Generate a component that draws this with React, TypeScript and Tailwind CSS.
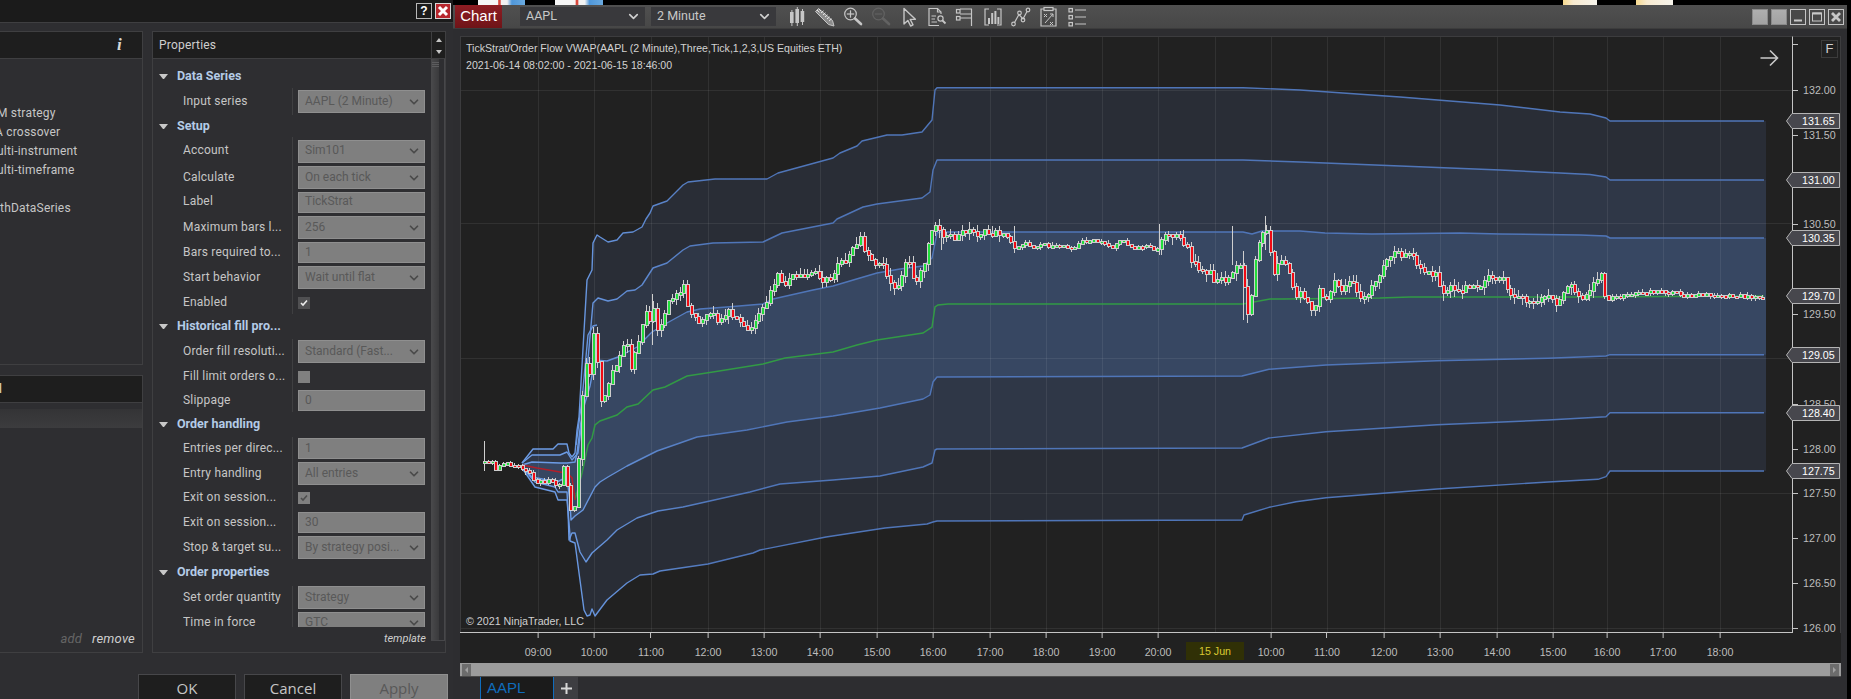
import React from "react";
import { ChevronDown } from "lucide-react";

type P = [number, number];
const z7 = (a: number[][]): P[] => a.map(([x, y]) => [560 + x / 3, 200 + y / 3]);
const z8 = (a: number[][]): P[] => a.map(([x, y]) => [1060 + x / 3, 200 + y / 3]);

const up3: P[] = [[522,463],[533,449],[553,449],[558,444],[567,444],[569,453],[572,457],[575,453],[577,430],[579,417],[587,280],[592,270],[593,243],[597,235],[600,237],[608,242],[617,240],[623,233],[633,232],[642,227],[646,219],[650,213],[653,206],[667,201],[678,190],[683,185],[688,182],[715,179],[767,179],[778,173],[833,158],[840,153],[857,146],[862,141],[887,135],[902,135],[922,132],[932,120],[935,90],[937,87.7],[1243,87.7],[1300,90],[1400,97],[1500,105],[1560,112],[1590,114],[1606,118],[1610,121],[1764,121]];
const up2: P[] = [[522,463],[532,455],[560,455],[567,452],[572,460],[578,453],[582,420],[585,393],[593,303],[598,298],[608,301],[617,299],[627,291],[635,290],[642,285],[653,268],[667,263],[683,250],[690,246],[713,243],[763,242],[782,233],[833,223],[837,219],[863,207],[877,204],[922,198],[930,192],[933,170],[937,160],[1243,160],[1300,162],[1400,166],[1500,170],[1560,173],[1590,174.5],[1606,177],[1610,180],[1764,180]];
const up1: P[] = [[522,465],[532,462],[560,463],[567,463],[575,462],[577,453],[582,413],[590,386],[595,360],[607,361],[618,357],[637,347],[652,332],[667,323],[687,312],[700,309],[727,307],[763,304],[773,299],[813,290],[833,286],[860,278],[877,273],[900,269],[923,266],[932,258],[937,233],[940,232],[1243,232],[1252,234],[1262,231],[1300,231],[1325,233],[1372,234],[1460,233],[1500,234],[1580,235],[1606,236],[1610,238],[1764,238]];
const stray: P[] = [[576,445],[582,400],[588,335],[593,326],[597,325]];
const dn1: P[] = [[522,467],[532,477],[557,482],[567,477],[570,503],[571,520],[575,516],[583,510],[595,487],[600,482],[608,477],[627,466],[657,451],[680,443],[697,437],[747,430],[787,422],[833,416],[880,408],[923,399],[930,395],[933,382],[937,377],[1242,376],[1269,369.3],[1326,365],[1437,360.7],[1548,358.3],[1606,356],[1610,354.7],[1764,354.7]];
const dn2: P[] = [[522,467],[535,482],[555,487],[558,492],[567,492],[568,510],[569,540],[572,533],[575,533],[580,552],[586,562],[592,553],[607,540],[617,530],[637,518],[658,511],[683,507],[750,492],[780,484],[833,480],[880,476],[923,467],[932,463],[935,450],[937,449],[1242,448],[1269,438],[1326,431.7],[1437,424.7],[1548,420],[1606,416.7],[1610,412.7],[1764,412.7]];
const dn3: P[] = [[522,468],[535,487],[555,492],[558,500],[567,500],[570,535],[570,541],[575,543],[584,610],[587,616],[590,615],[592,609],[595,616],[607,600],[627,583],[640,575],[653,574],[660,571],[708,564],[753,553],[760,550],[826,537],[885,528],[927,524],[933,522],[937,521],[1242,520],[1244,515],[1269,507.3],[1296,501.7],[1326,497.7],[1437,489],[1548,482],[1598,479.3],[1606,476.7],[1610,471],[1764,471]];
const green: P[] = [[575,500],[582,473],[588,445],[592,438],[595,425],[600,421],[617,415],[627,407],[638,404],[653,390],[665,387],[687,376],[713,372],[763,364],[785,358],[833,352],[857,345],[877,340],[923,333],[932,327],[935,307],[938,305],[948,304],[1243,304],[1270,299],[1283,299],[1380,298],[1410,297],[1580,297],[1764,296]];
const red: P[] = [[522,465],[537,468],[560,472],[567,473],[572,478],[575,500]];

const pricePath: P[] = [
  [484,463],[490,460],[495,470],[500,465],[507,463],[512,468],[515,465],[522,467],[525,470],[537,482],[553,480],[558,492],[562,465],[565,470],[568,497],[573,523],[577,477],[579,443],
  ...z7([[60,650],[70,530],[80,490],[90,540],[100,390],[110,470],[120,600],[135,590],[150,530],[170,490],[185,430],[200,430],[210,510],[225,450],[245,380],[255,340],[270,360],[280,320],[290,395],[310,360],[325,310],[345,295],[370,255],[380,320],[400,345],[415,375],[440,350],[460,350],[485,370],[505,340],[530,360],[545,375],[565,395],[585,370],[605,335],[625,290],[650,225],[665,260],[690,235],[720,235],[770,215],[790,245],[815,235],[835,180],[865,175],[900,115],[925,180],[945,195],[960,180],[985,240],[1015,265],[1030,200],[1045,195],[1065,255],[1090,190],[1115,80],[1140,85],[1155,115],[1185,115],[1215,90],[1250,100],[1330,100],[1365,145],[1390,130],[1420,140],[1450,130],[1480,145]]),
  ...z8([[0,135],[40,145],[70,120],[130,130],[160,145],[175,120],[220,142],[260,140],[295,150],[300,110],[330,100],[355,120],[380,130],[390,185],[410,200],[430,225],[445,215],[460,235],[490,240],[510,240],[525,195],[545,210],[555,300],[560,355],[575,270],[585,170],[600,120],[615,60],[630,160],[640,230],[660,175],[680,190],[700,280],[730,285],[760,340],[775,270],[800,300],[820,250],[850,270],[870,230],[900,295],[915,295],[950,240],[980,175],[1005,155],[1025,175],[1055,150],[1070,195],[1110,225],[1130,230],[1145,270],[1170,260],[1185,280],[1225,265],[1240,245],[1265,265],[1285,230],[1330,240],[1350,290],[1380,290],[1420,315],[1460,290],[1490,310],[1530,255]]),
  [1580,298],[1590,290],[1600,271],[1605,300],[1625,295],[1653,291],[1680,294],[1712,295],[1740,296],[1764,297],
];

const spikes: number[][] = [[484,441,471],[1159,224,255],[1232,226,265],[1243,251,320],[1247,280,323],[1265,216,250],[1014,226,253],[652,294,345],[941,225,250]];

const interp = (x: number) => {
  for (let i = 1; i < pricePath.length; i++) {
    const [a, b] = pricePath[i - 1];
    const [c, d] = pricePath[i];
    if (x <= c) return b + ((d - b) * (x - a)) / Math.max(c - a, 0.01);
  }
  return pricePath[pricePath.length - 1][1];
};
const noise = (i: number) => {
  const v = Math.sin(i * 12.9898) * 43758.5453;
  return v - Math.floor(v);
};
const vol = (x: number) => (x < 520 ? 0.35 : x < 575 ? 0.5 : x < 1000 ? 1 : x < 1160 ? 0.45 : x < 1600 ? 1 : 0.45);

const candles = (() => {
  const out: { x: number; top: number; bot: number; hi: number; lo: number; up: boolean }[] = [];
  let prev = interp(484);
  let i = 0;
  for (let x = 484; x < 1764; x += 3.76, i++) {
    const k = vol(x);
    const y = interp(x) + (noise(i) - 0.5) * 7 * k;
    const top = Math.min(prev, y);
    const bot = Math.max(prev, y);
    out.push({ x: Math.round(x), top, bot: Math.max(bot, top + 1.5), hi: top - noise(i + 400) * 8 * k, lo: bot + noise(i + 800) * 8 * k, up: y < prev });
    prev = y;
  }
  return out;
})();

const ps = (a: P[]) => a.map(([x, y]) => `${x},${y}`).join(" ");
const poly = (a: P[], b: P[]) => ps([...a, [1766, a[a.length - 1][1]], [1766, b[b.length - 1][1]], ...[...b].reverse()]);

const vGrid = [538,594,651,708,764,820,877,933,990,1046,1102,1158,1215,1271,1327,1384,1440,1497,1553,1607,1663,1720];
const hGrid = [90,223,358,493.5,628];
const timeLabels: [number, string][] = [[538,"09:00"],[594,"10:00"],[651,"11:00"],[708,"12:00"],[764,"13:00"],[820,"14:00"],[877,"15:00"],[933,"16:00"],[990,"17:00"],[1046,"18:00"],[1102,"19:00"],[1158,"20:00"],[1271,"10:00"],[1327,"11:00"],[1384,"12:00"],[1440,"13:00"],[1497,"14:00"],[1553,"15:00"],[1607,"16:00"],[1663,"17:00"],[1720,"18:00"]];
const priceTicks: [number, string][] = [[90,"132.00"],[135,"131.50"],[224,"130.50"],[314,"129.50"],[404,"128.50"],[449,"128.00"],[493.5,"127.50"],[538,"127.00"],[583,"126.50"],[628,"126.00"]];
const flags: [number, string][] = [[121,"131.65"],[180,"131.00"],[238,"130.35"],[296,"129.70"],[355,"129.05"],[413,"128.40"],[471,"127.75"]];

function ChartSvg() {
  return (
    <svg className="absolute inset-0" width={1332} height={597} viewBox="460 36 1332 597">
      <defs>
        <linearGradient id="bandStroke" gradientUnits="userSpaceOnUse" x1={560} x2={720} y1={0} y2={0}>
          <stop offset="0" stopColor="#6c9ce6" />
          <stop offset="1" stopColor="#4f75b8" />
        </linearGradient>
      </defs>
      <polygon points={poly(up3, dn3)} fill="#292d36" />
      <polygon points={poly(up2, dn2)} fill="#2f3747" />
      <polygon points={poly(up1, dn1)} fill="#374762" />
      <g stroke="#ffffff" strokeOpacity={0.075} shapeRendering="crispEdges">
        {vGrid.map((x) => <line key={x} x1={x} x2={x} y1={36} y2={633} />)}
        {hGrid.map((y) => <line key={y} x1={460} x2={1792} y1={y} y2={y} />)}
      </g>
      <path d="M460.5 633V36.5H1792" fill="none" stroke="#3c3c3e" shapeRendering="crispEdges" />
      <g fill="none" stroke="url(#bandStroke)" strokeWidth={1.4} strokeLinejoin="round">
        {[up3, up2, up1, stray, dn1, dn2, dn3].map((l, i) => <polyline key={i} points={ps(l)} />)}
      </g>
      <polyline points={ps(green)} fill="none" stroke="#329a45" strokeWidth={1.5} />
      <polyline points={ps(red)} fill="none" stroke="#b01f2a" strokeWidth={1.6} />
      <g shapeRendering="crispEdges">
        {spikes.map(([x, a, b]) => <line key={x} x1={x} x2={x} y1={a} y2={b} stroke="#cfcfcf" />)}
        {candles.map((c, i) => (
          <g key={i}>
            <line x1={c.x + 0.5} x2={c.x + 0.5} y1={c.hi} y2={c.lo} stroke="#cdcdcd" />
            <rect x={c.x - 1} y={c.top - 1} width={4} height={c.bot - c.top + 2} fill="#cdcdcd" />
            <rect x={c.x} y={c.top} width={2} height={c.bot - c.top} fill={c.up ? "#22dd3c" : "#f00a14"} />
          </g>
        ))}
      </g>
      <path d="M1760.5 58H1777.5M1770 50.5L1777.5 58L1770 65.5" fill="none" stroke="#c9c9c9" strokeWidth={1.6} />
    </svg>
  );
}

const ic = "#c6c6c6";
const Svg = ({ children }: { children: React.ReactNode }) => (
  <svg width={22} height={22} viewBox="0 0 22 22" fill="none" stroke={ic} strokeWidth={1.2}>{children}</svg>
);
const MagGlass = ({ c, plus }: { c: string; plus?: boolean }) => (
  <svg width={22} height={22} viewBox="0 0 22 22" fill="none" stroke={c} strokeWidth={1.2}>
    <circle cx={8.5} cy={8} r={5.8} />
    <path d="M4.8 8H12.2" />
    {plus && <path d="M8.5 4.3V11.7" />}
    <path d="M13 12.5L19 18" strokeWidth={2.6} strokeLinecap="round" />
  </svg>
);
const icons: React.ReactNode[] = [
  <Svg key="c"><g fill={ic} stroke="none"><rect x={4} y={6} width={3.6} height={11} /><rect x={5.4} y={4} width={1} height={16} /><rect x={9.4} y={3} width={3.6} height={14} /><rect x={10.8} y={1} width={1} height={19} /><rect x={14.6} y={5} width={3.6} height={11} /><rect x={16} y={3} width={1} height={16} /></g></Svg>,
  <Svg key="p"><path d="M4.5 2.5L1.5 5.5L14.5 18.5L20 20L18.5 14.5Z" fill="#8c8c8c" strokeWidth={1} /><path d="M3 4L5.5 6.5M5 3L7 5M7 7L9.5 4.8M9 9L11.5 6.8M11 11L13.5 8.8M13 13L15.5 10.8M15 15L17.5 12.8" strokeWidth={1} stroke="#e6e6e6" /></Svg>,
  <MagGlass key="z+" c={ic} plus />,
  <MagGlass key="z-" c="#626262" />,
  <Svg key="a"><path d="M6 2.5V18L9.8 14.4L12.6 20L15 18.8L12.2 13.4L17.4 13.2Z" strokeWidth={1.4} strokeLinejoin="round" /></Svg>,
  <Svg key="d"><path d="M13 19.5H3V2.5H11.5L15 6V8" /><path d="M11.5 2.5V6H15M5.5 10H10M5.5 13H9M5.5 16H11" /><circle cx={14.5} cy={12.5} r={2.6} /><path d="M16.5 14.5L19.5 17.5" strokeWidth={1.8} /></Svg>,
  <Svg key="r"><rect x={2.5} y={3.5} width={3.5} height={3.5} /><rect x={2.5} y={10.5} width={3.5} height={3.5} /><path d="M6 3H18M6 8H18M6 12H18M17.5 3V20" /></Svg>,
  <Svg key="f"><path d="M7 3H3V19H7M15 3H19V19H15" strokeWidth={1.2} /><g fill={ic} stroke="none"><rect x={6} y={12} width={2} height={6} /><rect x={9.2} y={7} width={2} height={11} /><rect x={12.4} y={5} width={2} height={13} /><rect x={15.4} y={11} width={2} height={7} /></g></Svg>,
  <Svg key="l"><path d="M4.5 16.5L9 8.5L13 13L17 5.5" /><circle cx={3.5} cy={18} r={1.8} /><circle cx={9.5} cy={7} r={1.8} /><circle cx={13} cy={14} r={1.8} /><circle cx={18} cy={4} r={1.8} /></Svg>,
  <Svg key="s"><path d="M6 3H3V20H18V3H15" /><rect x={6} y={1.5} width={9} height={3} /><path d="M6 8L9 11M9 8L6 11M12 16L15 19M15 16L12 19M7 17L15 8M12 8H15V11" strokeWidth={1} /></Svg>,
  <Svg key="t"><rect x={3} y={2.5} width={3.4} height={3.4} /><rect x={3} y={9.5} width={3.4} height={3.4} /><rect x={3} y={16.5} width={3.4} height={3.4} /><path d="M9 4H20M9 11H20M9 18H20" /></Svg>,
];

type Row = { t: "s" | "d" | "i" | "c" | "n"; l: string; v?: string; h: string; on?: boolean; dark?: boolean };
const rows: Row[] = [
  { t: "s", l: "Data Series", h: "h-[24px]" },
  { t: "d", l: "Input series", v: "AAPL (2 Minute)", h: "h-[27px]" },
  { t: "s", l: "Setup", h: "h-[22px]" },
  { t: "d", l: "Account", v: "Sim101", h: "h-[28px]" },
  { t: "d", l: "Calculate", v: "On each tick", h: "h-[25px]" },
  { t: "i", l: "Label", v: "TickStrat", h: "h-[24px]" },
  { t: "d", l: "Maximum bars l...", v: "256", h: "h-[27px]" },
  { t: "i", l: "Bars required to...", v: "1", h: "h-[23px]" },
  { t: "d", l: "Start behavior", v: "Wait until flat", h: "h-[27px]" },
  { t: "c", l: "Enabled", on: true, dark: true, h: "h-[23px]" },
  { t: "s", l: "Historical fill pro...", h: "h-[25px]" },
  { t: "d", l: "Order fill resoluti...", v: "Standard (Fast...", h: "h-[25px]" },
  { t: "c", l: "Fill limit orders o...", h: "h-[25px]" },
  { t: "i", l: "Slippage", v: "0", h: "h-[23px]" },
  { t: "s", l: "Order handling", h: "h-[25px]" },
  { t: "i", l: "Entries per direc...", v: "1", h: "h-[23px]" },
  { t: "d", l: "Entry handling", v: "All entries", h: "h-[27px]" },
  { t: "c", l: "Exit on session...", on: true, h: "h-[22px]" },
  { t: "i", l: "Exit on session...", v: "30", h: "h-[27px]" },
  { t: "d", l: "Stop & target su...", v: "By strategy posi...", h: "h-[23px]" },
  { t: "s", l: "Order properties", h: "h-[27px]" },
  { t: "d", l: "Set order quantity", v: "Strategy", h: "h-[23px]" },
  { t: "d", l: "Time in force", v: "GTC", h: "h-[28px]" },
];

function PropRow({ r }: { r: Row }) {
  if (r.t === "s")
    return (
      <div className={`${r.h} flex items-center shrink-0 font-bold text-[#b4cbe6] text-[12.5px] tracking-normal`}>
        <span className="ml-[6px] w-[9px] h-0 border-x-[4.5px] border-x-transparent border-t-[5px] border-t-[#c8c8c8]" />
        <span className="ml-[9px]">{r.l}</span>
      </div>
    );
  return (
    <div className={`${r.h} flex items-center shrink-0 text-[#c6c6c6]`}>
      <span className="ml-[30px] w-[109px] whitespace-nowrap overflow-hidden pb-[2px]">{r.l}</span>
      <span className="w-px h-full bg-[#3f3f41]" />
      <div className="ml-[5px] w-[127px] flex items-center">
        {r.t === "c" ? (
          <span className={`w-[12px] h-[12px] flex items-center justify-center ${r.dark ? "bg-[#505052]" : "bg-[#808080]"}`}>
            {r.on && (
              <svg width={8} height={8} viewBox="0 0 8 8" fill="none" stroke={r.dark ? "#ececec" : "#4d4d4d"} strokeWidth={1.6}><path d="M1 4L3 6L7 1.5" /></svg>
            )}
          </span>
        ) : (
          <div className={`w-full ${r.t === "d" ? "h-[23px]" : "h-[21px]"} shrink-0 flex items-center justify-between pl-[6px] pr-[3px] bg-[#7f7f7f] border border-[#8f8f8f] text-[#595959] tracking-normal`}>
            <span className="whitespace-nowrap pb-[2px]">{r.v}</span>
            {r.t === "d" && <ChevronDown size={14} strokeWidth={3} color="#4a4a4a" />}
          </div>
        )}
      </div>
    </div>
  );
}

const listRows: [string, string][] = [
  ["M strategy", "-ml-[3px]"],
  ["A crossover", "-ml-[5px]"],
  ["ulti-instrument", "-ml-[3px]"],
  ["ulti-timeframe", "-ml-[3px]"],
  ["", "ml-0"],
  ["thDataSeries", "ml-0"],
];

function LeftWindow() {
  return (
    <div className="w-[453px] h-full flex flex-col shrink-0 bg-[#2e2e31] overflow-hidden font-['Roboto',sans-serif] text-[12px] tracking-[0.2px]">
      <div className="h-[23px] shrink-0 flex items-center justify-end gap-[3px] pr-[2px] bg-[#1b1b1b] border-b border-[#3f3f41]">
        <div className="w-[16px] h-[16px] bg-[#1b1b1b] border border-[#b8b8b8] flex items-center justify-center text-white font-bold text-[12px] font-['Liberation_Sans',sans-serif]">?</div>
        <div className="w-[16px] h-[16px] bg-[#b7272e] border border-[#d8d8d8] flex items-center justify-center">
          <svg width={12} height={12} viewBox="0 0 12 12" stroke="#ffffff" strokeWidth={3}><path d="M2 2L10 10M10 2L2 10" /></svg>
        </div>
      </div>
      <div className="h-[622px] shrink-0 mt-[8px] flex gap-[9px]">
        <div className="w-[143px] shrink-0 flex flex-col gap-[10px]">
          <div className="h-[334px] border border-l-0 border-[#3f3f41] flex flex-col">
            <div className="h-[27px] shrink-0 bg-[#1e1e1e] border-b border-[#3f3f41] flex items-center justify-end pr-[20px] text-[#d8d8d8] font-['Liberation_Serif',serif] italic font-bold text-[17px]">i</div>
            <div className="pt-[44px] flex flex-col overflow-hidden text-[#c6c6c6]">
              {listRows.map(([t, m], i) => (
                <div key={i} className={`h-[19px] shrink-0 flex items-center whitespace-nowrap ${m}`}>{t}</div>
              ))}
            </div>
          </div>
          <div className="flex-1 border border-l-0 border-[#3f3f41] flex flex-col overflow-hidden">
            <div className="h-[27px] shrink-0 bg-[#1e1e1e] border-b border-[#3f3f41] flex items-center -ml-[5px] font-bold text-[#d0c8a8]">d</div>
            <div className="h-[19px] shrink-0 mt-[6px] bg-gradient-to-b from-[#343436] to-[#3c3c3e]" />
            <div className="flex-1" />
            <div className="h-[26px] shrink-0 flex items-center justify-end gap-[10px] pr-[7px] italic text-[13px]">
              <span className="text-[#656565]">add</span>
              <span className="text-[#cfcfcf]">remove</span>
            </div>
          </div>
        </div>
        <div className="w-[294px] shrink-0 border border-[#3f3f41] flex flex-col relative">
          <div className="h-[27px] shrink-0 bg-[#1e1e1e] border-b border-[#3f3f41] flex items-center pl-[6px] text-[#cfcfcf]">Properties</div>
          <div className="absolute right-0 top-0 w-[14px] h-[27px] border-l border-[#3f3f41] flex flex-col items-center justify-center gap-[8px]">
            <span className="h-0 w-0 border-x-[3.5px] border-x-transparent border-b-[4px] border-b-[#c4c4c4]" />
            <span className="h-0 w-0 border-x-[3.5px] border-x-transparent border-t-[4px] border-t-[#c4c4c4]" />
          </div>
          <div className="flex-1 flex min-h-0">
            <div className="flex-1 flex flex-col min-w-0">
              <div className="h-[568px] shrink-0 overflow-hidden pt-[5px] flex flex-col">
                {rows.map((r, i) => <PropRow key={i} r={r} />)}
              </div>
              <div className="flex-1 flex items-center justify-end pr-[5px] italic text-[#cfcfcf] text-[11px] tracking-normal">template</div>
            </div>
            <div className="w-[14px] shrink-0 h-[582px] flex border-b border-r border-[#47474a]">
              <div className="w-[8px] h-full bg-gradient-to-r from-[#4a4a4c] to-[#3a3a3c] flex flex-col gap-[1px] pt-[3px] items-end">
                <span className="h-px w-[7px] bg-[#5c5c5e]" />
                <span className="h-px w-[7px] bg-[#5c5c5e]" />
                <span className="h-px w-[7px] bg-[#5c5c5e]" />
              </div>
            </div>
          </div>
        </div>
      </div>
      <div className="mt-[21px] flex justify-end gap-[8px] pr-[5px] text-[15px] font-['Open_Sans',sans-serif] tracking-normal">
        <div className="w-[98px] h-[30px] shrink-0 border border-[#47474a] bg-[#1e1e1e] flex justify-center pt-[2px] text-[#c6c6c6]">OK</div>
        <div className="w-[98px] h-[30px] shrink-0 border border-[#47474a] bg-[#1e1e1e] flex justify-center pt-[2px] text-[#c6c6c6]">Cancel</div>
        <div className="w-[98px] h-[30px] shrink-0 border border-[#8f8f8f] bg-[#7f7f7f] flex justify-center pt-[2px] text-[#585858]">Apply</div>
      </div>
    </div>
  );
}

const GreyBtn = () => <div className="w-[16px] h-[16px] bg-gradient-to-b from-[#aeaeae] to-[#a2a2a2] border border-[#8a8a8a]" />;
const WinBtn = ({ children }: { children: React.ReactNode }) => (
  <div className="w-[16px] h-[16px] border border-[#c4c4c4] bg-[#484848] flex items-center justify-center">
    <svg width={12} height={12} viewBox="0 0 12 12" fill="none" stroke="#c8c8c8">{children}</svg>
  </div>
);

function TitleBar() {
  return (
    <div className="h-[24px] shrink-0 flex items-center bg-gradient-to-b from-[#505050] to-[#474747] border-b border-[#3c3c3c] font-['Roboto',sans-serif]">
      <div className="ml-[2px] w-[47px] h-[23px] bg-gradient-to-b from-[#8e1d23] to-[#6f1418] flex items-center justify-center text-white text-[15px] font-['Liberation_Sans',sans-serif]">Chart</div>
      <div className="ml-[18px] w-[125px] h-[19px] bg-[#39393c] flex items-center justify-between pl-[6px] pr-[4px] text-[#c8c8c8] text-[12.5px]">
        <span>AAPL</span><ChevronDown size={15} strokeWidth={2.6} color="#d0d0d0" />
      </div>
      <div className="ml-[6px] w-[125px] h-[19px] bg-[#39393c] flex items-center justify-between pl-[6px] pr-[4px] text-[#c8c8c8] text-[12.5px]">
        <span>2 Minute</span><ChevronDown size={15} strokeWidth={2.6} color="#d0d0d0" />
      </div>
      <div className="ml-[7px] flex">
        {icons.map((n, i) => <div key={i} className="w-[28px] flex justify-center">{n}</div>)}
      </div>
      <div className="ml-auto mr-[3px] flex gap-[3px]">
        <GreyBtn /><GreyBtn />
        <WinBtn><path d="M2 9.5H10" strokeWidth={2} /></WinBtn>
        <WinBtn><rect x={1.5} y={2} width={9} height={8} strokeWidth={1} /><path d="M1.5 2.5H10.5" strokeWidth={2} /></WinBtn>
        <WinBtn><path d="M2 2L10 10M10 2L2 10" strokeWidth={2.8} /></WinBtn>
      </div>
    </div>
  );
}

function ChartPanel() {
  return (
    <div className="flex-1 min-h-0 pl-[7px] pr-[6px] pt-[7px] flex flex-col font-['Liberation_Sans',sans-serif]">
      <div className="flex-1 flex flex-col bg-[#212121]">
        <div className="h-[597px] shrink-0 flex">
          <div className="w-[1332px] h-[597px] shrink-0 relative border-b border-[#c4c4c4] overflow-hidden">
            <ChartSvg />
            <div className="absolute left-[6px] top-[4px] text-[10.6px] leading-[17px] text-[#d2d2d2] whitespace-nowrap">
              <div>TickStrat/Order Flow VWAP(AAPL (2 Minute),Three,Tick,1,2,3,US Equities ETH)</div>
              <div>2021-06-14 08:02:00 - 2021-06-15 18:46:00</div>
            </div>
            <div className="absolute left-[6px] top-[577px] text-[10.7px] text-[#d0d0d0] whitespace-nowrap">© 2021 NinjaTrader, LLC</div>
          </div>
          <div className="w-[49px] h-[597px] shrink-0 relative border-l border-t border-r border-l-[#c4c4c4] border-t-[#3c3c3e] border-r-[#3c3c3e] bg-[#212121]">
            <span className="absolute left-0 top-[7px] w-[5px] h-px bg-[#c4c4c4]" />
            <div className="absolute left-[28px] top-[3px] w-[17px] h-[18px] border border-[#3c3c3c] flex items-center justify-center text-[13px] text-[#cfcfcf]">F</div>
            {priceTicks.map(([y, t]) => (
              <div key={t} className="absolute left-0 flex items-center h-[14px] -translate-y-1/2" style={{ top: y - 37 }}>
                <span className="w-[5px] h-px bg-[#c4c4c4]" />
                <span className="ml-[5px] text-[10.7px] text-[#bdbdbd]">{t}</span>
              </div>
            ))}
            {flags.map(([y, t]) => (
              <div key={t} className="absolute -left-[7px] h-[16px] w-[54px] -translate-y-1/2 flex items-center" style={{ top: y - 37 }}>
                <svg width={54} height={16} viewBox="0 0 54 16" className="absolute inset-0">
                  <path d="M0.5 8L6 0.5H53.5V15.5H6Z" fill="#47474d" stroke="#b4b4b4" />
                </svg>
                <span className="relative ml-[16px] text-[10.7px] text-white">{t}</span>
              </div>
            ))}
          </div>
        </div>
        <div className="h-[30px] shrink-0 relative">
          {timeLabels.map(([x, t], i) => (
            <div key={i} className="absolute top-0 -translate-x-1/2 flex flex-col items-center" style={{ left: x - 460 }}>
              <span className="w-px h-[5px] bg-[#c4c4c4]" />
              <span className="mt-[6px] text-[10.7px] text-[#bdbdbd]">{t}</span>
            </div>
          ))}
          <div className="absolute left-[726px] top-[9px] w-[58px] h-[18px] bg-[#303006] flex items-center justify-center text-[10.7px] text-[#d9c832]">15 Jun</div>
        </div>
        <div className="h-[14px] shrink-0 bg-[#9c9c9c] flex justify-between px-[2px] items-center border-b border-[#4a4a4a]">
          <div className="w-[9px] h-[12px] bg-[#6c6c6c] flex items-center justify-center">
            <span className="w-0 h-0 border-y-[3px] border-y-transparent border-r-[3px] border-r-[#a0a0a0]" />
          </div>
          <div className="w-[9px] h-[12px] bg-[#6c6c6c] flex items-center justify-center">
            <span className="w-0 h-0 border-y-[3px] border-y-transparent border-l-[3px] border-l-[#a0a0a0]" />
          </div>
        </div>
      </div>
    </div>
  );
}

function TabBar() {
  return (
    <div className="h-[22px] shrink-0 flex pl-[27px] bg-[#2d2d30] font-['Liberation_Sans',sans-serif]">
      <div className="w-[74px] h-[22px] bg-[#1b1b1b] border-x border-[#0f6cbd] flex items-center pl-[6px] text-[15px] text-[#0f6cbd]">AAPL</div>
      <div className="w-[24px] h-[22px] bg-[#3e3e42] flex items-center justify-center">
        <svg width={11} height={11} viewBox="0 0 11 11" stroke="#d8d8d8" strokeWidth={2}><path d="M5.5 0V11M0 5.5H11" /></svg>
      </div>
    </div>
  );
}

const Peek = ({ c }: { c: string }) => <div className={`h-[5px] ${c}`} />;
const blueTop = "bg-[linear-gradient(90deg,#f6f6f6_0%,#f6f6f6_42%,#d8483c_44%,#d8483c_47%,#f2f2f2_50%,#f2f2f2_62%,#4f97da_72%,#6aaae0_100%)]";
const creamTop = "bg-[linear-gradient(90deg,#f6d98e_0%,#f8ead0_30%,#f6f4ec_100%)]";

export default function App() {
  return (
    <div className="w-[1851px] h-[699px] flex bg-black overflow-hidden">
      <LeftWindow />
      <div className="w-[1398px] h-full flex flex-col shrink-0">
        <div className="h-[5px] shrink-0 flex">
          <Peek c={`ml-[25px] w-[47px] ${blueTop}`} />
          <Peek c={`ml-[30px] w-[48px] ${blueTop}`} />
          <Peek c={`ml-[960px] w-[34px] ${creamTop}`} />
          <Peek c={`ml-[39px] w-[37px] ${creamTop}`} />
        </div>
        <div className="w-[1394px] flex-1 min-h-0 flex flex-col bg-[#2d2d30]">
          <TitleBar />
          <ChartPanel />
          <TabBar />
        </div>
      </div>
    </div>
  );
}
